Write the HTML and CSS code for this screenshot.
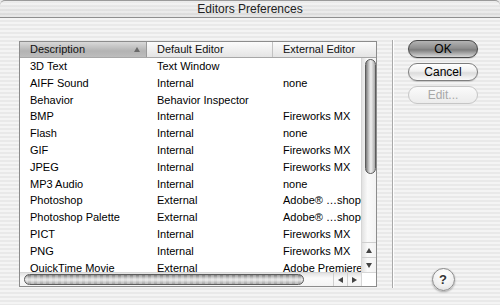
FILE: index.html
```html
<!DOCTYPE html>
<html lang="en">
<head>
    <meta charset="UTF-8">
    <title>Editors Preferences</title>
    <link rel="stylesheet" href="styles.css">
</head>
<body>
    <div class="window">
        <div class="titlebar">Editors Preferences</div>
        <div class="content">
            <div class="listbox">
                <div class="list-head">
                    <div class="hcell sorted">Description<span class="sort-arrow"></span></div>
                    <div class="hcell">Default Editor</div>
                    <div class="hcell">External Editor</div>
                </div>
                <div class="list-rows">
                    <div class="row"><span>3D Text</span><span>Text Window</span><span></span></div>
                    <div class="row"><span>AIFF Sound</span><span>Internal</span><span>none</span></div>
                    <div class="row"><span>Behavior</span><span>Behavior Inspector</span><span></span></div>
                    <div class="row"><span>BMP</span><span>Internal</span><span>Fireworks MX</span></div>
                    <div class="row"><span>Flash</span><span>Internal</span><span>none</span></div>
                    <div class="row"><span>GIF</span><span>Internal</span><span>Fireworks MX</span></div>
                    <div class="row"><span>JPEG</span><span>Internal</span><span>Fireworks MX</span></div>
                    <div class="row"><span>MP3 Audio</span><span>Internal</span><span>none</span></div>
                    <div class="row"><span>Photoshop</span><span>External</span><span>Adobe® …shop® 7.0</span></div>
                    <div class="row"><span>Photoshop Palette</span><span>External</span><span>Adobe® …shop® 7.0</span></div>
                    <div class="row"><span>PICT</span><span>Internal</span><span>Fireworks MX</span></div>
                    <div class="row"><span>PNG</span><span>Internal</span><span>Fireworks MX</span></div>
                    <div class="row"><span>QuickTime Movie</span><span>External</span><span>Adobe Premiere® 6.5</span></div>
                </div>
                <div class="vscroll">
                    <div class="vtrack"><div class="vthumb"></div></div>
                    <div class="sarrow"><span class="tri up"></span></div>
                    <div class="sarrow"><span class="tri down"></span></div>
                </div>
                <div class="hscroll">
                    <div class="htrack"><div class="hthumb"></div></div>
                    <div class="sarrow"><span class="tri left"></span></div>
                    <div class="sarrow"><span class="tri right"></span></div>
                </div>
                <div class="corner"></div>
            </div>
            <div class="separator"></div>
            <div class="buttons">
                <button class="btn default">OK</button>
                <button class="btn">Cancel</button>
                <button class="btn" disabled>Edit...</button>
                <div class="help">?</div>
            </div>
        </div>
    </div>
</body>
</html>
```

FILE: styles.css
```css
body {
    margin: 0;
    font-family: "Liberation Sans", Arial, sans-serif;
    color: #000;
}
.window {
    width: 500px;
    height: 305px;
    overflow: hidden;
    background: repeating-linear-gradient(to bottom, #e9e9e9 0, #e9e9e9 2px, #f4f4f4 2px, #f4f4f4 4px);
}
.titlebar {
    height: 17px;
    line-height: 17px;
    text-align: center;
    font-size: 12px;
    color: #222;
    border-top: 1px solid #9a9a9a;
    border-bottom: 1px solid #8e8e8e;
    border-radius: 5px 5px 0 0;
    box-sizing: border-box;
    height: 18px;
    background:
        linear-gradient(to bottom, rgba(255,255,255,0.35), rgba(0,0,0,0.04)),
        repeating-linear-gradient(to bottom, #e2e2e2 0, #e2e2e2 2px, #efefef 2px, #efefef 4px);
}
.content {
    display: flex;
    padding: 22px 0 0 19px;
}
.listbox {
    margin-top: 1px;
    width: 358px;
    height: 246px;
    box-sizing: border-box;
    border: 1px solid #8c8c8c;
    background: #fff;
    display: grid;
    grid-template-columns: 341px 15px;
    grid-template-rows: 16px 1fr 14px;
    font-size: 11px;
}
.list-head {
    grid-column: 1 / 3;
    display: grid;
    grid-template-columns: 127px 126px 1fr;
    background: linear-gradient(to bottom, #fbfbfb, #e4e4e4);
    border-bottom: 1px solid #a7a7a7;
    box-sizing: border-box;
}
.hcell {
    position: relative;
    padding-left: 10px;
    line-height: 15px;
    border-right: 1px solid #c2c2c2;
    color: #111;
}
.hcell:last-child {
    border-right: none;
}
.hcell.sorted {
    background: linear-gradient(to bottom, #d9d9d9, #b3b3b3 60%, #bdbdbd);
    border-right-color: #9a9a9a;
}
.sort-arrow {
    position: absolute;
    right: 6px;
    top: 5px;
    border-left: 3px solid transparent;
    border-right: 3px solid transparent;
    border-bottom: 5px solid #6a6a6a;
}
.list-rows {
    overflow: hidden;
}
.row {
    display: grid;
    grid-template-columns: 127px 126px 88px;
    height: 16.8px;
    line-height: 16.8px;
}
.row span {
    padding-left: 10px;
    white-space: nowrap;
    overflow: hidden;
}
.vscroll {
    display: flex;
    flex-direction: column;
    border-left: 1px solid #d6d6d6;
    background: linear-gradient(to right, #e2e2e2, #fafafa 40%, #f3f3f3);
}
.vtrack {
    flex: 1;
    padding: 1px 0 0 3px;
}
.vthumb {
    width: 9px;
    height: 113px;
    border: 1px solid #5c5c5c;
    border-radius: 6px;
    background: linear-gradient(to right, #7a7a7a, #cfcfcf 35%, #f0f0f0 55%, #a9a9a9);
}
.sarrow {
    display: flex;
    align-items: center;
    justify-content: center;
    height: 14px;
    border-top: 1px solid #cfcfcf;
}
.tri {
    width: 0;
    height: 0;
}
.tri.up {
    border-left: 3px solid transparent;
    border-right: 3px solid transparent;
    border-bottom: 5px solid #444;
}
.tri.down {
    border-left: 3px solid transparent;
    border-right: 3px solid transparent;
    border-top: 5px solid #444;
}
.tri.left {
    border-top: 3px solid transparent;
    border-bottom: 3px solid transparent;
    border-right: 5px solid #444;
}
.tri.right {
    border-top: 3px solid transparent;
    border-bottom: 3px solid transparent;
    border-left: 5px solid #444;
}
.hscroll {
    display: flex;
    border-top: 1px solid #d6d6d6;
    background: linear-gradient(to bottom, #e2e2e2, #fafafa 40%, #f3f3f3);
}
.htrack {
    flex: 1;
    padding: 1px 0 0 4px;
}
.hthumb {
    width: 278px;
    height: 9px;
    border: 1px solid #5c5c5c;
    border-radius: 6px;
    background:
        repeating-linear-gradient(to right, rgba(255,255,255,0.25) 0, rgba(255,255,255,0.25) 3px, transparent 3px, transparent 6px),
        linear-gradient(to bottom, #7a7a7a, #cfcfcf 35%, #e6e6e6 55%, #a0a0a0);
}
.hscroll .sarrow {
    width: 13px;
    height: auto;
    border-top: none;
    border-left: 1px solid #cfcfcf;
}
.corner {
    border-left: 1px solid #d6d6d6;
    border-top: 1px solid #d6d6d6;
    background: #fff;
}
.separator {
    width: 1px;
    height: 248px;
    margin: 0 14px 0 15px;
    background: #a9a9a9;
    border-right: 1px solid #fff;
}
.buttons {
    width: 70px;
    height: 251px;
    display: flex;
    flex-direction: column;
    align-items: center;
    gap: 5px;
}
.btn {
    width: 70px;
    height: 18px;
    padding: 0;
    font-family: "Liberation Sans", Arial, sans-serif;
    font-size: 12px;
    color: #000;
    border: 1px solid #7e7e7e;
    border-radius: 9px;
    background: linear-gradient(to bottom, #ffffff, #f0f0f0 45%, #dcdcdc 55%, #fafafa);
    box-shadow: 0 1px 1px rgba(0,0,0,0.15);
}
.btn.default {
    border-color: #474747;
    background: linear-gradient(to bottom, #b4b4b4, #8e8e8e 45%, #7d7d7d 55%, #d8d8d8);
}
.btn:disabled {
    color: #a8a8a8;
    border-color: #c6c6c6;
    background: linear-gradient(to bottom, #fbfbfb, #f3f3f3 50%, #ececec);
    box-shadow: none;
}
.help {
    margin-top: auto;
    width: 21px;
    height: 21px;
    line-height: 21px;
    text-align: center;
    border: 1px solid #8a8a8a;
    border-radius: 50%;
    font-size: 13px;
    font-weight: bold;
    color: #333;
    background: radial-gradient(circle at 50% 30%, #ffffff, #f0f0f0 60%, #d6d6d6);
    box-shadow: 0 1px 2px rgba(0,0,0,0.3);
}
```
